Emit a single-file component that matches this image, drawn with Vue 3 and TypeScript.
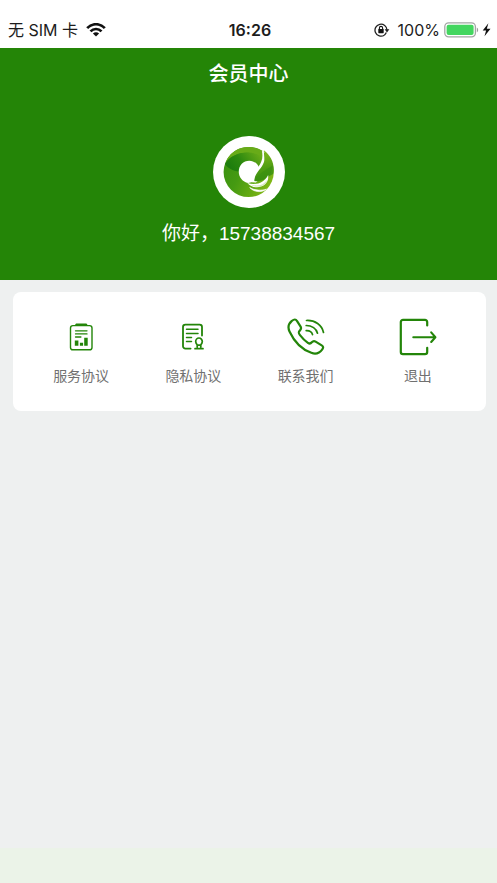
<script setup lang="ts">
type IconName = 'service' | 'privacy' | 'contact' | 'logout'

interface MenuEntry {
  icon: IconName
  label: string
}

const phone = '15738834567'

const entries: MenuEntry[] = [
  { icon: 'service', label: '服务协议' },
  { icon: 'privacy', label: '隐私协议' },
  { icon: 'contact', label: '联系我们' },
  { icon: 'logout', label: '退出' },
]
</script>

<template>
  <div class="page">
    <div class="status">
      <div class="status-side">
        <span>无 SIM 卡</span>
        <svg class="wifi" width="20" height="14" viewBox="0 0 20 14" aria-hidden="true">
          <g fill="none" stroke="#111" stroke-width="2.7">
            <path d="M1.2 5.2C6-.1 14-.1 18.8 5.2" />
            <path d="M4.5 8.4c3.1-3.2 7.9-3.2 11 0" />
          </g>
          <path d="M6.9 10.5c1.8-1.7 4.4-1.7 6.2 0L10 13.6z" fill="#111" />
        </svg>
      </div>
      <time class="clock">16:26</time>
      <div class="status-side status-end">
        <svg class="lock" width="16" height="14" viewBox="0 0 16 14" aria-hidden="true">
          <path d="M10.3 12.2A6 6 0 1 1 13 7" fill="none" stroke="#222" stroke-width="1.3" />
          <path d="M10.6 6.3h4.8L13 9.4z" fill="#222" />
          <path d="M12.3 9.6a6 6 0 0 1-2 2.6" fill="none" stroke="#222" stroke-width="1.3" />
          <rect x="4.3" y="6" width="5.4" height="4.2" rx=".6" fill="#111" />
          <path d="M5.4 6.2V5a1.6 1.6 0 0 1 3.2 0v1.2" fill="none" stroke="#111" stroke-width="1.1" />
        </svg>
        <span>100%</span>
        <svg class="battery" width="48" height="16" viewBox="0 0 48 16" aria-hidden="true">
          <rect x=".8" y=".9" width="30.6" height="14" rx="3.8" fill="#fff" stroke="#a3a6a4" stroke-width="1.3" />
          <rect x="2.6" y="2.7" width="27" height="10.4" rx="2" fill="#43d65f" />
          <path d="M32.8 5.5c1.8.7 1.8 4.1 0 4.8z" fill="#9a9d9b" />
          <path d="M44.4 1.2 38.7 8.5h3.4l-1.6 5.7 6-7.5h-3.7z" fill="#111" />
        </svg>
      </div>
    </div>

    <header class="hero">
      <h1 class="title">会员中心</h1>
      <svg class="avatar" width="72" height="72" viewBox="37 31 218 218" role="img" aria-label="头像">
        <defs>
          <linearGradient id="ring" x1="0" y1=".3" x2="1" y2=".8">
            <stop offset="0" stop-color="#3a9210" />
            <stop offset=".35" stop-color="#459a12" />
            <stop offset=".65" stop-color="#62a912" />
            <stop offset="1" stop-color="#8abb18" />
          </linearGradient>
          <linearGradient id="sweep" x1="0" y1=".4" x2="1" y2="0">
            <stop offset="0" stop-color="#1d7d0d" />
            <stop offset=".35" stop-color="#2c890f" />
            <stop offset="1" stop-color="#72b019" />
          </linearGradient>
          <linearGradient id="leaf" x1=".4" y1="0" x2=".5" y2="1">
            <stop offset="0" stop-color="#84bb1b" />
            <stop offset=".6" stop-color="#4d9c13" />
            <stop offset="1" stop-color="#3b910f" />
          </linearGradient>
        </defs>
        <circle cx="146" cy="140" r="109" fill="#fff" />
        <circle cx="145" cy="140" r="76" fill="url(#ring)" />
        <path d="M75 110C87 82 113 64 145 64c16 0 31 5 43 13l-2 20C150 72 105 78 75 110Z" fill="#68ab18" />
        <path d="M73 116c22-37 75-46 113-22l-4 30-9 8c-3-16-14-26-28-26-17 0-29 13-28 33-20-2-36-11-44-23Z" fill="url(#sweep)" />
        <path d="M115 139c0-19 14-33 32-33 14 0 26 9 30 22-10 14-17 26-20 42l-14 3c-16-3-28-17-28-34Z" fill="#fff" />
        <path d="M185 76c4 21 0 33-10 47-11 16-18 29-20 48l12 1 30-26-6-67Z" fill="#fff" />
        <path d="M191 74c18 14 30 34 30 58 0 6-1 10-2 14-5 3-9 5-13 7-13 12-26 17-44 14 1-16 10-27 19-38 13-18 16-34 10-55Z" fill="url(#leaf)" />
        <path d="M163 163c12-18 30-27 54-43-1 22-10 32-20 37-11 8-22 10-34 6Z" fill="#368e10" opacity=".55" />
        <path d="M141 173c27 8 50 1 63-24 3 24-14 37-34 37-12 0-22-4-29-13Z" fill="#fff" />
        <path d="M150 178c23 7 41 1 51-14-4 14-16 20-29 20-8 0-15-1-22-6Z" fill="#6ead16" opacity=".3" />
        <path d="M148 187c16 9 34 10 51 5-15 11-37 10-51-5Z" fill="#fff" stroke="#fff" stroke-width="2" />
      </svg>
      <p class="greeting">你好，{{ phone }}</p>
    </header>

    <main class="content">
      <nav class="card">
        <button v-for="entry in entries" :key="entry.icon" class="entry" type="button">
          <svg
            class="entry-icon"
            width="40"
            height="40"
            viewBox="0 0 40 40"
            fill="none"
            stroke="#238509"
            stroke-linecap="round"
            stroke-linejoin="round"
            aria-hidden="true"
          >
            <template v-if="entry.icon === 'service'">
              <rect x="9.5" y="8.6" width="21.5" height="24.2" rx="2.4" stroke-width="1.4" />
              <path d="M14 8.9c0-1.7.8-2.3 2-2.3h8.5c1.2 0 2 .6 2 2.3Z" fill="#238509" stroke="none" />
              <path d="M14.5 13.8H26M14.5 16.9H26M14.5 20h5.4" stroke-width="1.3" />
              <path d="M13.8 23.5h3.6v5.3h-3.6zM18.9 25.8h3.2v3h-3.2zM23.2 20.8h3.5v8h-3.5z" fill="#238509" stroke="none" />
            </template>
            <template v-else-if="entry.icon === 'privacy'">
              <path d="M17.6 31.6h-5.2a2.4 2.4 0 0 1-2.4-2.4V10a2.4 2.4 0 0 1 2.4-2.4h14.2A2.4 2.4 0 0 1 29 10v8.5" stroke-width="1.8" />
              <path d="M13.5 12.2H25M13.5 16.5H25M13.5 20.6h5M13.5 24.6h5" stroke-width="1.5" />
              <path d="M24.2 30v-2.2c-1-1-1.5-2.1-1.5-3.2a3.3 3.6 0 0 1 6.6 0c0 1.100-.5 2.200-1.500 3.200V30M22 31.700h8M24.500 28.200h3" stroke-width="1.700" />
            </template>
            <template v-else-if="entry.icon === 'contact'">
              <path
                d="M5.600 4.100C8.400 1.900 9.700 2 11.100 4.200l3.500 5.500c1 1.600.4 2.700-.8 3.900-1.600 1.500-1.500 2.300.2 4.500 2.200 2.900 4.900 5.600 7.900 7.700 1.700 1.200 2.700 1 3.900-.5 1.200-1.400 2.200-1.700 3.800-.7l6.100 3.800c1.800 1.100 1.800 2.300.6 3.900-2.800 3.900-6.500 5.200-11 3.500C16 32.500 8.200 24.600 3.500 14.500 1.600 10.300 2.300 7 5.600 4.100Z"
                stroke-width="2.2"
              />
              <path d="M20.500 3.500c8.500-.4 15.500 4.300 17 12M20.200 8.500c5.600 0 10.300 3 11.300 7.700M20.200 13.700c3.300-.2 5.500 1.200 6.300 3.900" stroke-width="1.700" />
            </template>
            <template v-else>
              <path d="M29.200 8.500V5A2.200 2.200 0 0 0 27 2.800H5A2.200 2.200 0 0 0 2.800 5v30A2.200 2.200 0 0 0 5 37.200h22a2.200 2.200 0 0 0 2.200-2.200v-4.200" stroke-width="2.200" />
              <path d="M15.300 20.200h22M33.200 15.400l4.200 4.800-4.200 4.800" stroke-width="2.100" />
            </template>
          </svg>
          <span>{{ entry.label }}</span>
        </button>
      </nav>
    </main>

    <footer class="bottom"></footer>
  </div>
</template>

<style>
body {
  margin: 0;
}
</style>

<style scoped>
.page {
  display: flex;
  flex-direction: column;
  min-height: 100vh;
  background: #eef0f0;
  font-family: "Liberation Sans", "Noto Sans CJK SC", sans-serif;
}

.status {
  display: grid;
  grid-template-columns: 1fr auto 1fr;
  align-items: center;
  padding: 18px 5px 6px 8px;
  background: #fff;
  color: #1c1c1c;
  font-family: Inter, "Noto Sans CJK SC", sans-serif;
  font-size: 16px;
  line-height: 24px;
  white-space: nowrap;
}

.status-side {
  display: flex;
  align-items: center;
  gap: 8px;
}

.status-end {
  justify-content: flex-end;
}

.battery {
  margin-left: -4px;
}

.clock {
  font-weight: 600;
}

.hero {
  display: flex;
  flex-direction: column;
  align-items: center;
  padding: 12px 0 32px;
  background: #248507;
  color: #fff;
}

.title {
  margin: 0;
  font-size: 20px;
  font-weight: 500;
  line-height: 28px;
}

.avatar {
  margin-top: 48px;
}

.greeting {
  margin: 12px 0 0;
  font-size: 19px;
  line-height: 28px;
}

.content {
  flex: 1;
  padding: 12px 11px 12px 13px;
}

.card {
  display: grid;
  grid-template-columns: repeat(4, 1fr);
  padding: 25px 12px 24px;
  border-radius: 8px;
  background: #fff;
}

.entry {
  display: flex;
  flex-direction: column;
  align-items: center;
  gap: 8px;
  padding: 0;
  border: 0;
  background: none;
  color: #707070;
  font-family: inherit;
  font-size: 14px;
  line-height: 22px;
  cursor: pointer;
}

.bottom {
  height: 35px;
  background: #ebf3e8;
}
</style>
